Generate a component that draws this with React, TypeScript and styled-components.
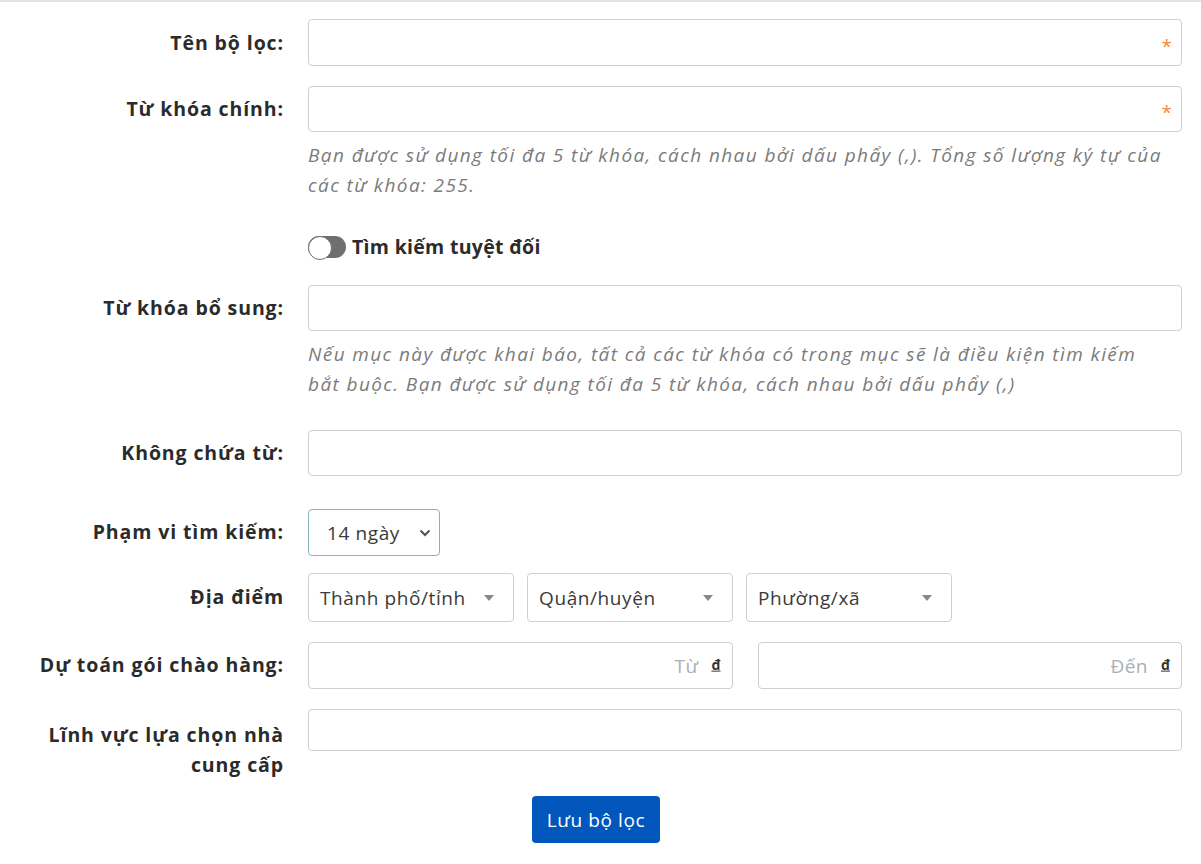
import styled, { createGlobalStyle } from "styled-components";

const GlobalStyle = createGlobalStyle`
  body {
    margin: 0;
    background: #fff;
    font-family: "Open Sans", "Noto Sans", sans-serif;
    color: #333;
  }
  * { box-sizing: border-box; }
`;

const Page = styled.div`
  border-top: 2px solid #e2e2e2;
  padding: 17px 19px 20px 0;
`;

const Form = styled.form`
  display: flex;
  flex-direction: column;
  gap: 20px;
`;

const Row = styled.div<{ $gapTop?: number }>`
  display: grid;
  grid-template-columns: 284px 1fr;
  column-gap: 24px;
  align-items: start;
  margin-top: ${(p) => p.$gapTop ?? 0}px;
`;

const Label = styled.label<{ $top?: number }>`
  text-align: right;
  font-weight: 700;
  font-size: 19.5px;
  letter-spacing: 0.9px;
  line-height: 30px;
  color: #2b2b2b;
  padding-top: ${(p) => p.$top ?? 8}px;
`;

const Field = styled.div`
  display: flex;
  flex-direction: column;
`;

const InputWrap = styled.div`
  position: relative;
  display: flex;
  align-items: center;
`;

const Input = styled.input<{ $h?: number; $right?: boolean }>`
  width: 100%;
  height: ${(p) => p.$h ?? 47}px;
  border: 1px solid #cfcfcf;
  border-radius: 4px;
  padding: 0 ${(p) => (p.$right ? 33 : 40)}px 0 12px;
  text-align: ${(p) => (p.$right ? "right" : "left")};
  font: inherit;
  font-size: 19px;
  letter-spacing: 0.5px;
  outline: none;
  &::placeholder {
    color: #aab0b6;
  }
`;

const Required = styled.span`
  position: absolute;
  right: 10px;
  top: 50%;
  transform: translateY(-30%);
  color: #f48a36;
  font-size: 19px;
  line-height: 1;
`;

const Currency = styled.span`
  position: absolute;
  right: 12px;
  top: 50%;
  transform: translateY(-60%);
  font-size: 14px;
  font-weight: 700;
  color: #333;
  text-decoration: underline;
`;

const Help = styled.p`
  margin: 8px 0 0;
  font-style: italic;
  font-size: 19px;
  letter-spacing: 1.4px;
  line-height: 30px;
  color: #7b7b7b;
`;

const ToggleLine = styled.div`
  display: flex;
  align-items: center;
  gap: 6px;
  margin-top: 13px;
  margin-bottom: 5px;
  font-weight: 700;
  font-size: 19.5px;
  letter-spacing: 0.3px;
  color: #2b2b2b;
`;

const Switch = styled.span`
  position: relative;
  display: inline-block;
  width: 38px;
  height: 22px;
  border-radius: 11px;
  background: #6f6f6f;
  &::after {
    content: "";
    position: absolute;
    left: 0;
    top: 0;
    width: 22px;
    height: 22px;
    border-radius: 50%;
    background: #fff;
    border: 1.5px solid #6f6f6f;
  }
`;

const Select = styled.div<{ $w: number; $accent?: boolean }>`
  width: ${(p) => p.$w}px;
  height: ${(p) => (p.$accent ? 47 : 49)}px;
  border: 1px solid ${(p) => (p.$accent ? "#86b3bd" : "#cfcfcf")};
  border-radius: 4px;
  display: flex;
  align-items: center;
  justify-content: space-between;
  padding: 0 ${(p) => (p.$accent ? 8 : 19)}px 0 ${(p) => (p.$accent ? 18 : 11)}px;
  font-size: 19px;
  letter-spacing: 0.6px;
  color: #3a3a3a;
`;

const Caret = styled.span`
  width: 0;
  height: 0;
  border-left: 5px solid transparent;
  border-right: 5px solid transparent;
  border-top: 6px solid #888;
`;

const Selects = styled.div`
  display: flex;
  gap: 13px;
`;

const Pair = styled.div`
  display: grid;
  grid-template-columns: 1fr 1fr;
  column-gap: 25px;
`;

const Actions = styled.div`
  display: flex;
  justify-content: center;
  margin-top: -4px;
  padding-left: 10px;
`;

const Button = styled.button`
  background: #0257bd;
  color: #fff;
  border: none;
  border-radius: 4px;
  height: 47px;
  padding: 0 15px;
  font: inherit;
  font-size: 19px;
  letter-spacing: 0.6px;
  cursor: pointer;
`;

const Chevron = () => (
  <svg width="12" height="8" viewBox="0 0 12 8">
    <path d="M1.5 1.5 6 6l4.5-4.5" fill="none" stroke="#555" strokeWidth="2" />
  </svg>
);

export default function App() {
  return (
    <>
      <GlobalStyle />
      <Page>
        <Form>
          <Row>
            <Label $top={9}>Tên bộ lọc:</Label>
            <InputWrap>
              <Input />
              <Required>*</Required>
            </InputWrap>
          </Row>
          <Row>
            <Label>Từ khóa chính:</Label>
            <Field>
              <InputWrap>
                <Input $h={46} />
                <Required>*</Required>
              </InputWrap>
              <Help>
                Bạn được sử dụng tối đa 5 từ khóa, cách nhau bởi dấu phẩy (,). Tổng số lượng ký tự của
                <br />
                các từ khóa: 255.
              </Help>
            </Field>
          </Row>
          <Row>
            <span />
            <ToggleLine>
              <Switch />
              Tìm kiếm tuyệt đối
            </ToggleLine>
          </Row>
          <Row>
            <Label>Từ khóa bổ sung:</Label>
            <Field>
              <Input $h={46} />
              <Help>
                Nếu mục này được khai báo, tất cả các từ khóa có trong mục sẽ là điều kiện tìm kiếm
                <br />
                bắt buộc. Bạn được sử dụng tối đa 5 từ khóa, cách nhau bởi dấu phẩy (,)
              </Help>
            </Field>
          </Row>
          <Row $gapTop={11}>
            <Label>Không chứa từ:</Label>
            <Input $h={46} />
          </Row>
          <Row $gapTop={13}>
            <Label>Phạm vi tìm kiếm:</Label>
            <Select $w={132} $accent>
              14 ngày
              <Chevron />
            </Select>
          </Row>
          <Row $gapTop={-3}>
            <Label $top={9}>Địa điểm</Label>
            <Selects>
              <Select $w={206}>
                Thành phố/tỉnh
                <Caret />
              </Select>
              <Select $w={206}>
                Quận/huyện
                <Caret />
              </Select>
              <Select $w={206}>
                Phường/xã
                <Caret />
              </Select>
            </Selects>
          </Row>
          <Row>
            <Label>Dự toán gói chào hàng:</Label>
            <Pair>
              <InputWrap>
                <Input placeholder="Từ" $right />
                <Currency>đ</Currency>
              </InputWrap>
              <InputWrap>
                <Input placeholder="Đến" $right />
                <Currency>đ</Currency>
              </InputWrap>
            </Pair>
          </Row>
          <Row>
            <Label $top={11}>
              Lĩnh vực lựa chọn nhà
              <br />
              cung cấp
            </Label>
            <Input $h={42} />
          </Row>
          <Actions>
            <Button type="button">Lưu bộ lọc</Button>
          </Actions>
        </Form>
      </Page>
    </>
  );
}
